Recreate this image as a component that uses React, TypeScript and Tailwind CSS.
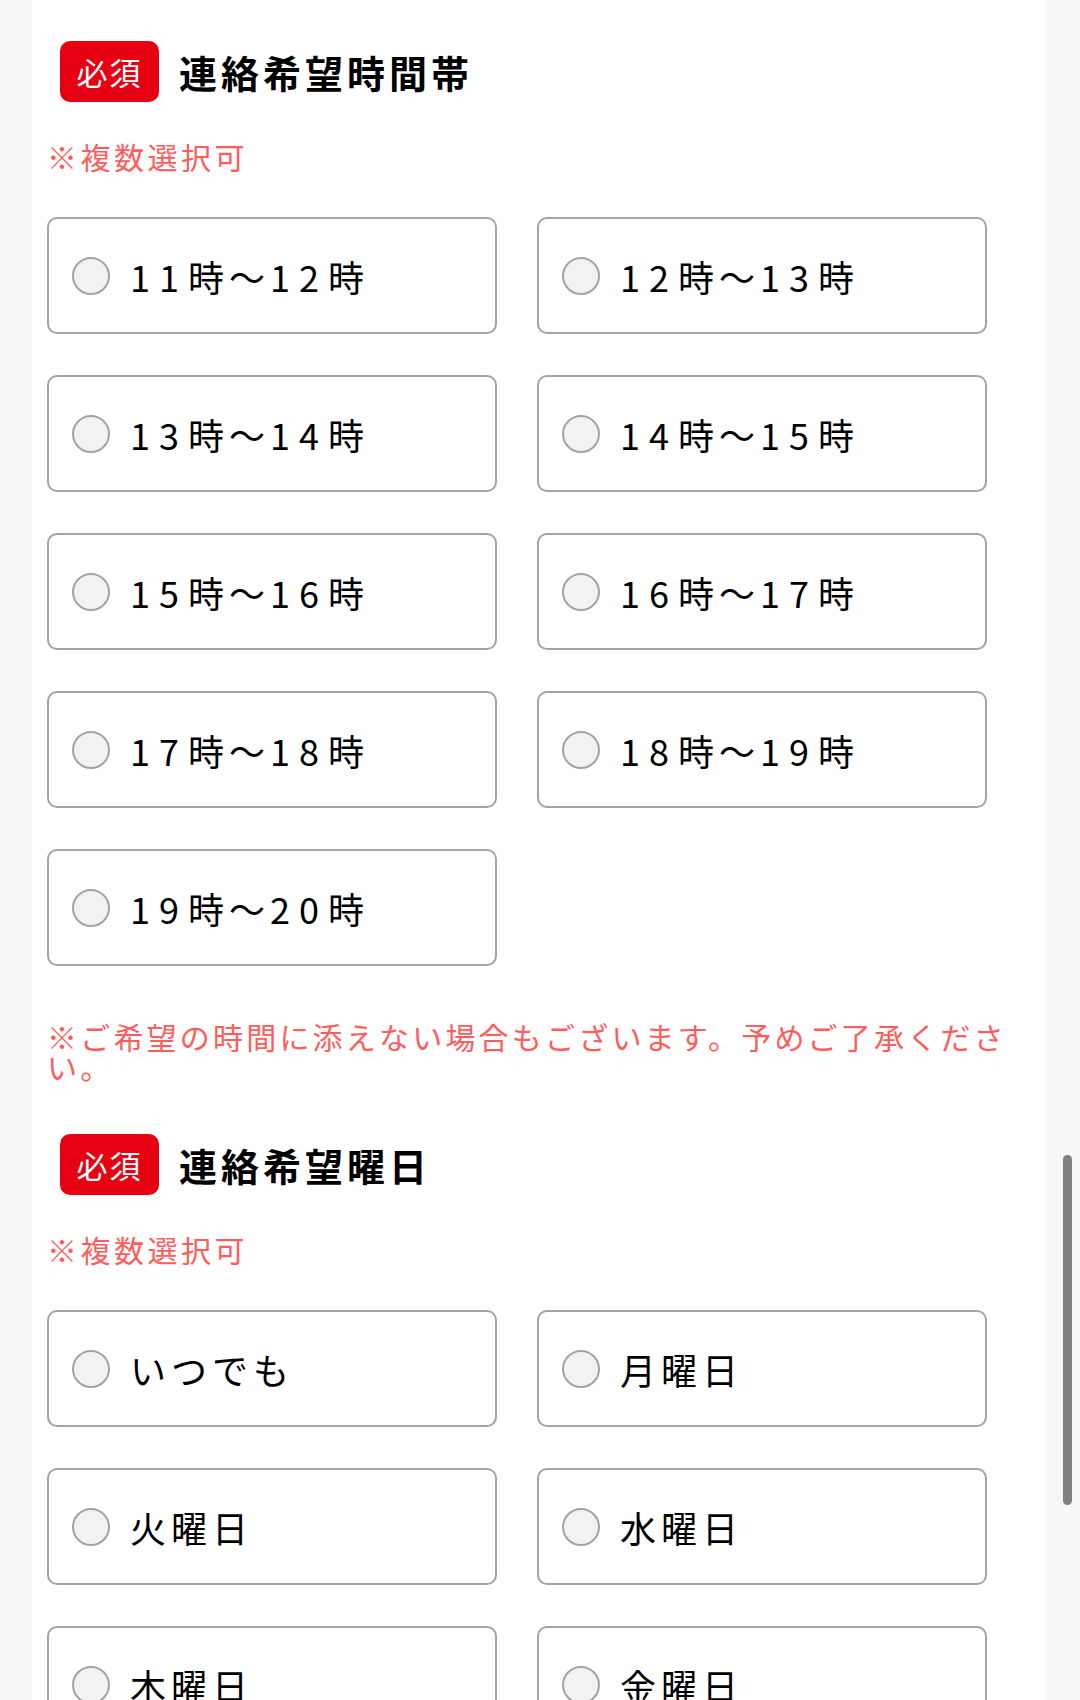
import React from "react";

const font = { fontFamily: '"Noto Sans CJK JP", "Noto Sans", sans-serif' };

function Badge() {
  return (
    <div className="flex h-[61px] w-[99px] shrink-0 items-center justify-center rounded-[10px] bg-[#e60012] text-[31px] leading-none tracking-[2px] text-white">
      必須
    </div>
  );
}

function Label({ text }: { text: string }) {
  const parts = text.split(/(\d+)/).filter((p) => p.length > 0);
  return (
    <span className="ml-[20px] text-[36px] leading-none tracking-[5px] text-black">
      {parts.map((p, i) =>
        /^\d+$/.test(p) ? (
          <span key={i} className="tracking-[9px]">
            {p}
          </span>
        ) : (
          <span key={i}>{p}</span>
        )
      )}
    </span>
  );
}

function Option({ label }: { label: string }) {
  return (
    <div className="flex h-[117px] items-center rounded-[10px] border-2 border-[#a3a3a3] bg-white pl-[23px]">
      <span className="h-[38px] w-[38px] shrink-0 rounded-full border-2 border-[#a3a3a3] bg-[#f2f2f2]" />
      <Label text={label} />
    </div>
  );
}

function Section({ title, options }: { title: string; options: string[] }) {
  return (
    <div>
      <div className="ml-[13px] flex items-center gap-[20px]">
        <Badge />
        <div className="text-[38px] font-bold leading-none tracking-[4px] text-black">{title}</div>
      </div>
      <div className="mt-[39px] text-[30px] leading-[30px] tracking-[3.5px] text-[#ff5c5c]">※複数選択可</div>
      <div className="mt-[46px] grid grid-cols-[450px_450px] gap-x-[40px] gap-y-[41px]">
        {options.map((o) => (
          <Option key={o} label={o} />
        ))}
      </div>
    </div>
  );
}

export default function App() {
  return (
    <div className="relative h-[1700px] w-full overflow-hidden bg-[#f7f7f7]" style={font}>
      <div className="ml-[32px] h-full w-[1014px] bg-white px-[15px] pt-[41px]">
        <Section
          title="連絡希望時間帯"
          options={[
            "11時〜12時",
            "12時〜13時",
            "13時〜14時",
            "14時〜15時",
            "15時〜16時",
            "16時〜17時",
            "17時〜18時",
            "18時〜19時",
            "19時〜20時",
          ]}
        />
        <div className="mb-[53px] mt-[55px] text-[30px] leading-[30px] tracking-[3.2px] text-[#ff5c5c]">
          ※ご希望の時間に添えない場合もございます。予めご了承ください。
        </div>
        <Section
          title="連絡希望曜日"
          options={["いつでも", "月曜日", "火曜日", "水曜日", "木曜日", "金曜日"]}
        />
      </div>
      <div className="absolute left-[1063px] top-[1155px] h-[350px] w-[9px] rounded-full bg-[#808080]" />
    </div>
  );
}
